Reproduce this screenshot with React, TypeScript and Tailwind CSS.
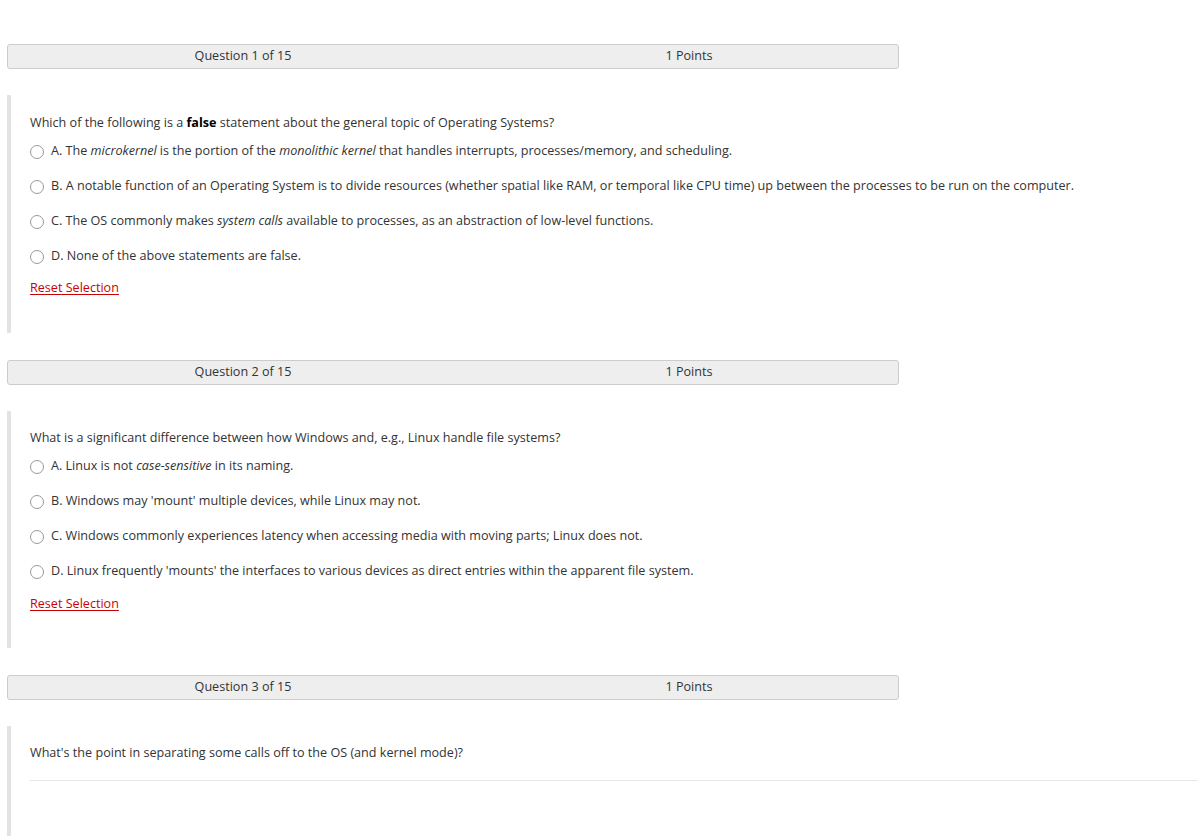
import React from "react";

function Bar({ n }: { n: number }) {
  return (
    <div className="w-[892px] h-[25px] bg-[#eeeeee] border border-[#cccccc] rounded-[3px] flex items-center overflow-visible text-[12.6px] leading-[20px] text-[#333333] pb-[1px]">
      <div className="w-[12px] shrink-0" />
      <div className="w-[446px] shrink-0 text-center">Question {n} of 15</div>
      <div className="w-[446px] shrink-0 text-center">1 Points</div>
    </div>
  );
}

function Radio() {
  return <span className="inline-block w-[14px] h-[14px] rounded-full border border-[#999999] bg-white shrink-0" />;
}

function Option({ children }: { children: React.ReactNode }) {
  return (
    <div className="h-[35px] pt-[2px] flex items-center gap-[7px] whitespace-nowrap">
      <Radio />
      <span>{children}</span>
    </div>
  );
}

function Reset({ extra }: { extra?: boolean }) {
  return (
    <div className={extra ? "mt-[6px] h-[20px] leading-[20px]" : "mt-[5px] h-[20px] leading-[20px]"}>
      <a className="text-[#cc0000] underline underline-offset-2 cursor-pointer">Reset Selection</a>
    </div>
  );
}

export default function App() {
  return (
    <div
      className="w-[1198px] h-[836px] overflow-hidden bg-white text-[12.6px] text-[#333333]"
      style={{ fontFamily: '"Open Sans", "Noto Sans", sans-serif' }}
    >
      <div className="pl-[7px] pt-[44px]">
        <Bar n={1} />
        <div className="mt-[26px] border-l-[4px] border-[#e3e3e3] pl-[19px] pt-[18px] pb-[35px]">
          <div className="h-[20px] leading-[20px]">
            Which of the following is a <b className="font-bold text-black">false</b> statement about the general topic of Operating Systems?
          </div>
          <Option>
            A. The <i>microkernel</i> is the portion of the <i>monolithic kernel</i> that handles interrupts, processes/memory, and scheduling.
          </Option>
          <Option>
            B. A notable function of an Operating System is to divide resources (whether spatial like RAM, or temporal like CPU time) up between the processes to be run on the computer.
          </Option>
          <Option>
            C. The OS commonly makes <i>system calls</i> available to processes, as an abstraction of low-level functions.
          </Option>
          <Option>D. None of the above statements are false.</Option>
          <Reset />
        </div>
        <div className="mt-[27px]">
          <Bar n={2} />
        </div>
        <div className="mt-[26px] border-l-[4px] border-[#e3e3e3] pl-[19px] pt-[17px] pb-[34px]">
          <div className="h-[20px] leading-[20px]">
            What is a significant difference between how Windows and, e.g., Linux handle file systems?
          </div>
          <Option>
            A. Linux is not <i>case-sensitive</i> in its naming.
          </Option>
          <Option>B. Windows may 'mount' multiple devices, while Linux may not.</Option>
          <Option>C. Windows commonly experiences latency when accessing media with moving parts; Linux does not.</Option>
          <Option>D. Linux frequently 'mounts' the interfaces to various devices as direct entries within the apparent file system.</Option>
          <Reset extra />
        </div>
        <div className="mt-[27px]">
          <Bar n={3} />
        </div>
        <div className="mt-[26px] border-l-[4px] border-[#e3e3e3] pl-[19px] pt-[17px] h-[200px]">
          <div className="h-[20px] leading-[20px]">
            What's the point in separating some calls off to the OS (and kernel mode)?
          </div>
          <div className="mt-[17px] border-t border-[#e6e6e6]" />
        </div>
      </div>
    </div>
  );
}
